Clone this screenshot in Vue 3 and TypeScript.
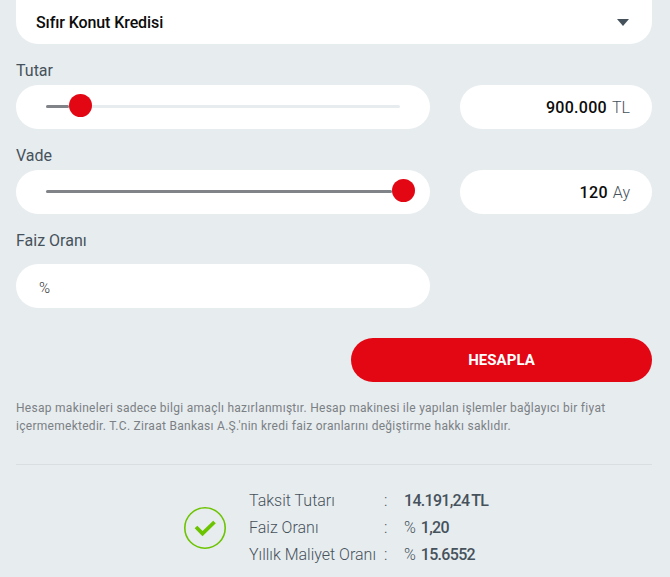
<template>
  <div class="page">
    <div class="select">
      <span>Sıfır Konut Kredisi</span>
      <i class="caret"></i>
    </div>

    <template v-for="s in sliders" :key="s.label">
      <div class="label">{{ s.label }}</div>
      <div class="row">
        <div class="pill slider">
          <div class="track">
            <div class="fill" :style="{ width: s.pos + '%' }"></div>
            <div class="thumb" :style="{ left: s.pos + '%' }"></div>
          </div>
        </div>
        <div class="pill amount">
          <b>{{ s.value }}</b><span>{{ s.unit }}</span>
        </div>
      </div>
    </template>

    <div class="label rate-label">Faiz Oranı</div>
    <div class="row">
      <div class="pill rate">%</div>
    </div>

    <div class="actions">
      <button class="submit">HESAPLA</button>
    </div>

    <p class="note">
      Hesap makineleri sadece bilgi amaçlı hazırlanmıştır. Hesap makinesi ile yapılan işlemler bağlayıcı bir fiyat
      içermemektedir. T.C. Ziraat Bankası A.Ş.'nin kredi faiz oranlarını değiştirme hakkı saklıdır.
    </p>

    <hr class="divider" />

    <div class="result">
      <svg class="check" viewBox="0 0 44 44" width="44" height="44">
        <circle cx="22" cy="22" r="20.2" fill="none" stroke="#6cc400" stroke-width="1.6" />
        <path d="M13 21 L19.5 27.5 L31.5 16" fill="none" stroke="#6cc400" stroke-width="3.8" />
      </svg>
      <div class="lines">
        <template v-for="r in results" :key="r.name">
          <span class="name">{{ r.name }}</span>
          <span class="colon">:</span>
          <span class="val"><em v-if="r.pre">{{ r.pre }}</em><b>{{ r.val }}</b></span>
        </template>
      </div>
    </div>
  </div>
</template>

<script setup lang="ts">
const sliders = [
  { label: 'Tutar', value: '900.000', unit: 'TL', pos: 6.5 },
  { label: 'Vade', value: '120', unit: 'Ay', pos: 97.74 }
];

const results = [
  { name: 'Taksit Tutarı', pre: '', val: '14.191,24 TL' },
  { name: 'Faiz Oranı', pre: '%', val: '1,20' },
  { name: 'Yıllık Maliyet Oranı', pre: '%', val: '15.6552' }
];
</script>

<style scoped>
.page {
  box-sizing: border-box;
  width: 670px;
  height: 577px;
  overflow: hidden;
  padding: 0 18px 0 16px;
  background: #e7ecef;
  font-family: Roboto, 'Liberation Sans', sans-serif;
  color: #46525b;
}

.select {
  display: flex;
  align-items: center;
  justify-content: space-between;
  height: 44px;
  padding: 0 23px 0 20px;
  border-radius: 0 0 22px 22px;
  background: #fff;
  font-size: 16px;
  font-weight: 500;
  letter-spacing: -0.1px;
  color: #0c0c0c;
}

.caret {
  width: 0;
  height: 0;
  border-left: 6px solid transparent;
  border-right: 6px solid transparent;
  border-top: 7px solid #46525b;
}

.label {
  height: 41px;
  padding-top: 17px;
  box-sizing: border-box;
  font-size: 16px;
  line-height: 19px;
}

.rate-label {
  height: 50px;
}

.row {
  display: grid;
  grid-template-columns: 414px 192px;
  column-gap: 30px;
}

.pill {
  box-sizing: border-box;
  height: 44px;
  border-radius: 22px;
  background: #fff;
}

.slider {
  display: flex;
  align-items: center;
  padding: 0 30px 1px;
}

.track {
  position: relative;
  flex: 1;
  height: 3px;
  border-radius: 2px;
  background: #e7ecef;
}

.fill {
  height: 3px;
  border-radius: 2px;
  background: #808488;
}

.thumb {
  position: absolute;
  top: -11px;
  width: 23px;
  height: 23px;
  border-radius: 50%;
  background: #e30613;
}

.amount {
  display: flex;
  align-items: center;
  justify-content: flex-end;
  gap: 5px;
  padding: 0 22px;
  font-size: 16px;
  color: #0c0c0c;
}

.amount b {
  font-weight: 500;
  letter-spacing: 0.3px;
}

.amount span {
  font-weight: 300;
  color: #46525b;
}

.rate {
  display: flex;
  align-items: center;
  padding: 4px 22px 0 23px;
  font-size: 15px;
  font-weight: 300;
  color: #333;
}

.actions {
  display: flex;
  justify-content: flex-end;
  margin-top: 30px;
}

.submit {
  width: 301px;
  height: 44px;
  border: 0;
  border-radius: 22px;
  background: #e30613;
  color: #fff;
  font-family: inherit;
  font-size: 15px;
  font-weight: 700;
  letter-spacing: 0.05px;
}

.note {
  margin: 17px 0 0;
  font-size: 12px;
  line-height: 18px;
  color: #7b8084;
  letter-spacing: 0.28px;
}

.divider {
  height: 1px;
  margin: 29px 0 0;
  border: 0;
  background: #d9dee1;
}

.result {
  display: flex;
  align-items: center;
  margin-top: 22px;
  padding-left: 167px;
  gap: 22px;
}

.check {
  display: block;
}

.lines {
  display: grid;
  grid-template-columns: 135px 20px auto;
  grid-auto-rows: 27px;
  align-items: center;
  font-size: 16px;
  font-weight: 300;
}

.val b {
  font-weight: 500;
  letter-spacing: -0.7px;
  word-spacing: -1px;
}

.val em {
  font-style: normal;
  margin-right: 5px;
}
</style>

<style>
html,
body {
  margin: 0;
  background: #e7ecef;
}
</style>
